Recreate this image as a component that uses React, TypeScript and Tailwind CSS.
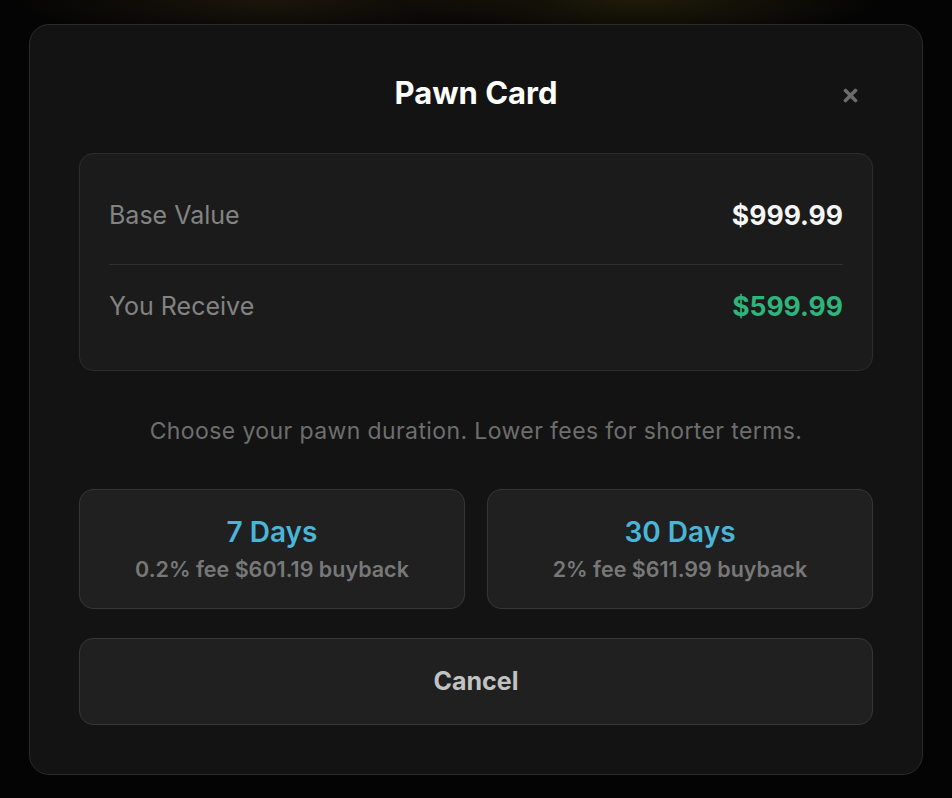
import React from 'react'

const options = [
  { label: '7 Days', detail: '0.2% fee $601.19 buyback' },
  { label: '30 Days', detail: '2% fee $611.99 buyback' },
]

const PawnCardModal = () => {
  return (
    <div
      className="min-h-[798px] w-full flex justify-center pt-[24px] bg-[#040404] bg-[radial-gradient(ellipse_260px_40px_at_270px_0px,rgba(70,55,25,0.35),transparent),radial-gradient(ellipse_240px_40px_at_640px_0px,rgba(80,70,20,0.35),transparent)]"
      style={{ fontFamily: 'Inter, "Noto Sans", sans-serif' }}
    >
      <div className="w-[894px] h-[751px] rounded-[20px] border border-[#2a2a2a] bg-[#131313] pt-[49px] px-[49px] pb-[49px] flex flex-col">
        {/* Header */}
        <div className="relative h-[38px] flex items-center justify-center">
          <h2 className="text-[31px] leading-[38px] font-bold text-white">Pawn Card</h2>
          <button className="absolute right-[15px] top-[14px] text-[#6b6b6b]">
            <svg width="15" height="15" viewBox="0 0 15 15" fill="none">
              <path d="M2.5 2.5L12.5 12.5M12.5 2.5L2.5 12.5" stroke="currentColor" strokeWidth="3.6" strokeLinecap="round" />
            </svg>
          </button>
        </div>

        {/* Value summary */}
        <div className="mt-[41px] rounded-[14px] border border-[#2c2c2c] bg-[#1b1b1b] px-[29px] pt-[40px] pb-[41px]">
          <div className="flex items-center justify-between h-[44px]">
            <span className="text-[25px] text-[#838383]">Base Value</span>
            <span className="text-[26.5px] font-bold text-[#f5f5f5]">$999.99</span>
          </div>
          <div className="mt-[26px] h-px bg-[#2f2f2f]"></div>
          <div className="mt-[20px] flex items-center justify-between h-[44px]">
            <span className="text-[25px] text-[#838383]">You Receive</span>
            <span className="text-[26.5px] font-bold text-[#2fb47c]">$599.99</span>
          </div>
        </div>

        <p className="mt-[46px] h-[28px] leading-[28px] text-center text-[23px] tracking-[0.4px] text-[#6e6e6e]">
          Choose your pawn duration. Lower fees for shorter terms.
        </p>

        {/* Duration options */}
        <div className="mt-[44px] grid grid-cols-2 gap-[22px]">
          {options.map((opt) => (
            <button
              key={opt.label}
              className="h-[120px] rounded-[14px] border border-[#363636] bg-[#202020] flex flex-col items-center justify-center gap-[8px]"
            >
              <span className="text-[28px] leading-[32px] font-semibold text-[#4bb5d8]">{opt.label}</span>
              <span className="text-[21.5px] leading-[26px] font-semibold text-[#787878]">{opt.detail}</span>
            </button>
          ))}
        </div>

        <button className="mt-[29px] h-[87px] rounded-[14px] border border-[#363636] bg-[#202020] flex items-center justify-center">
          <span className="text-[25px] font-bold text-[#c2c2c2]">Cancel</span>
        </button>
      </div>
    </div>
  )
}

export default function App() {
  return <PawnCardModal />
}
